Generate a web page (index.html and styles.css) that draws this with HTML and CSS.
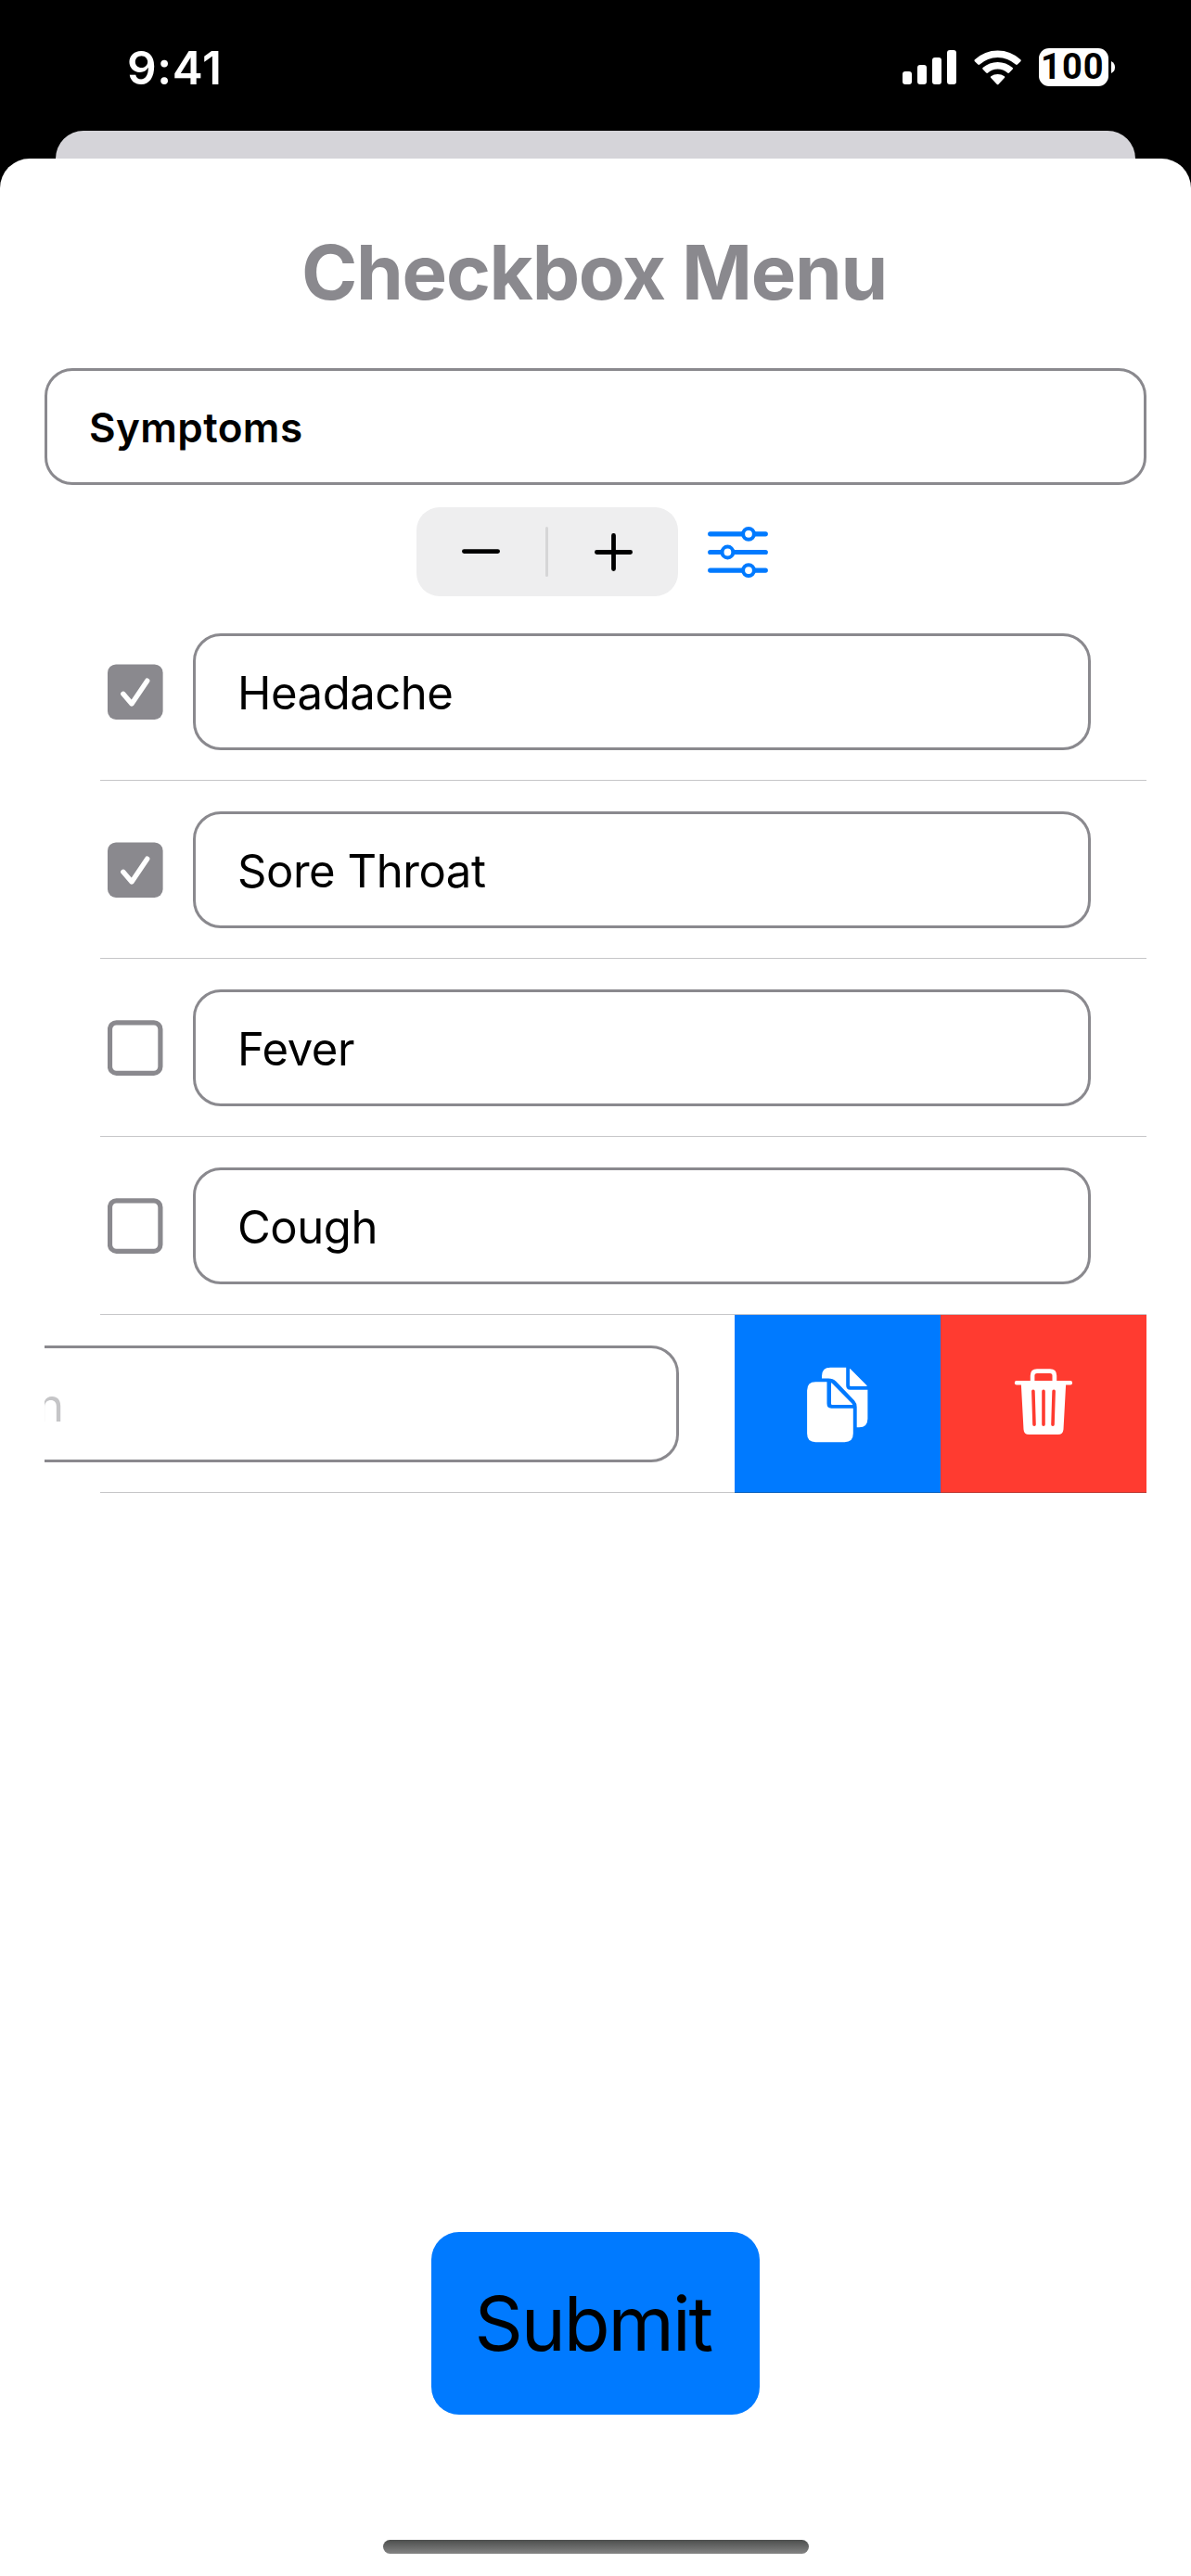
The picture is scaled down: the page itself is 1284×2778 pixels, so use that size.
FILE: index.html
```html
<!DOCTYPE html>
<html lang="en">
<head>
<meta charset="utf-8">
<title>Checkbox Menu</title>
<link rel="stylesheet" href="styles.css">
</head>
<body>
<div class="screen">
  <header class="status">
    <span class="time">9:41</span>
    <div class="indicators">
      <svg class="signal" viewBox="0 0 58 37"><rect y="23" width="10" height="14" rx="3"/><rect x="16" y="16" width="10" height="21" rx="3"/><rect x="32" y="8" width="10" height="29" rx="3"/><rect x="48" width="10" height="37" rx="3"/></svg>
      <svg class="wifi" viewBox="1050 53.5 51 38"><path d="M1050.9 63.8Q1050 64.8 1050.9 65.7L1054.3 69.1Q1055.2 70 1056.2 69.1Q1064.5 61.4 1075.6 61.4T1095 69.1Q1096 70 1096.9 69.1L1100.3 65.7Q1101.2 64.8 1100.3 63.8Q1089.6 54 1075.6 54T1050.9 63.8Z"/><path d="M1059.5 72.5Q1058.7 73.4 1059.6 74.3L1063.2 77.9Q1064.1 78.8 1065.1 78Q1069.6 74.1 1075.6 74.1T1086.1 78Q1087.1 78.8 1088 77.9L1091.6 74.3Q1092.5 73.4 1091.7 72.5Q1084.7 66.5 1075.6 66.5T1059.5 72.5Z"/><path d="M1068.3 81.8Q1067.4 82.7 1068.3 83.6L1074.6 90.2Q1075.6 91.2 1076.6 90.2L1082.9 83.6Q1083.8 82.7 1082.9 81.8Q1079.6 79.4 1075.6 79.4T1068.3 81.8Z"/></svg>
      <div class="battery">
        <span class="level">100</span>
        <svg class="cap" viewBox="0 0 4 13"><path d="M0 0Q4 2 4 6.5T0 13Z"/></svg>
      </div>
    </div>
  </header>
  <div class="backdrop"></div>
  <main class="sheet">
    <h1 class="title">Checkbox Menu</h1>
    <div class="field heading">Symptoms</div>
    <div class="controls">
      <div class="stepper">
        <svg class="sign" viewBox="0 0 41 41"><path d="M2.4 19.6H38.6"/></svg>
        <span class="divider"></span>
        <svg class="sign" viewBox="0 0 41 41"><path d="M2.4 20.5H38.6M20.5 2.4V38.6"/></svg>
      </div>
      <svg class="sliders" viewBox="0 0 65 56"><path d="M2.7 8.8H62.3M2.7 28.5H62.3M2.7 48.1H62.3"/><circle cx="44" cy="8.8" r="5.9"/><circle cx="21.4" cy="28.5" r="5.9"/><circle cx="44" cy="48.1" r="5.9"/></svg>
    </div>
    <ul class="list">
      <li class="row">
        <svg class="check" viewBox="0 0 60 60"><rect class="fill" y="0.4" width="59.6" height="59.6" rx="9"/><path d="M16.8 32.3L26 43L42.7 18.2"/></svg>
        <div class="field item">Headache</div>
      </li>
      <li class="row">
        <svg class="check" viewBox="0 0 60 60"><rect class="fill" y="0.4" width="59.6" height="59.6" rx="9"/><path d="M16.8 32.3L26 43L42.7 18.2"/></svg>
        <div class="field item">Sore Throat</div>
      </li>
      <li class="row">
        <svg class="check" viewBox="0 0 60 60"><rect class="box" x="2.5" y="2.9" width="54.4" height="54.4" rx="7"/></svg>
        <div class="field item">Fever</div>
      </li>
      <li class="row">
        <svg class="check" viewBox="0 0 60 60"><rect class="box" x="2.5" y="2.9" width="54.4" height="54.4" rx="7"/></svg>
        <div class="field item">Cough</div>
      </li>
      <li class="row swiped">
        <div class="field item placeholder">n</div>
        <div class="action copy">
          <svg class="glyph" viewBox="792 1418 222 192"><path d="M886 1486.5V1484Q886 1474.7 895.2 1474.7H912.2V1494Q912.2 1498.7 916.5 1498.7H935.4V1530Q935.4 1539.3 926.2 1539.3H923.7V1517.5Q923.7 1513.2 921 1510.2L901.4 1489.8Q898 1486.5 893 1486.5Z"/><path d="M916 1477Q916 1475.5 917 1476.5L934.4 1494Q935.4 1495 934 1495H917.2Q916 1495 916 1493.8Z"/><path d="M870.1 1499.6Q870.1 1490.3 879.3 1490.3H891.5V1513.5Q891.5 1518.7 896.3 1518.7H919.8V1546Q919.8 1555.2 910.6 1555.2H879.3Q870.1 1555.2 870.1 1546Z"/><path d="M896 1492Q896 1490.8 897 1491.7L918.9 1513.9Q919.8 1515 918.5 1515H897.2Q896 1515 896 1513.8Z"/></svg>
        </div>
        <div class="action trash">
          <svg class="glyph" viewBox="1014 1418 222 192"><path fill-rule="evenodd" d="M1110.8 1489V1483.5Q1110.8 1476.3 1118 1476.3H1132Q1139.2 1476.3 1139.2 1483.5V1489H1154Q1156.1 1489 1156.1 1491.2T1154 1493.4H1149.1L1146.5 1541.4Q1146 1547 1140.6 1547H1109.3Q1103.9 1547 1103.5 1541.4L1100.9 1493.4H1096Q1093.8 1493.4 1093.8 1491.2T1096 1489ZM1115.4 1489H1134.5V1483.6Q1134.5 1481 1132 1481H1118Q1115.4 1481 1115.4 1483.6Z"/><path class="slot" d="M1113.9 1500.4L1115 1536.2M1125 1500.4V1536.2M1136.1 1500.4L1135 1536.2"/></svg>
        </div>
      </li>
    </ul>
    <button class="submit">Submit</button>
    <div class="home"></div>
  </main>
</div>
</body>
</html>
```
FILE: styles.css
```css
* { box-sizing: border-box; }
body { margin: 0; background: #000; font-family: Inter, "Liberation Sans", sans-serif; color: #000; }
svg { display: block; flex: none; }
.screen { width: 1284px; height: 2778px; display: flex; flex-direction: column; overflow: hidden; background: #000; }

.status { height: 141px; padding: 0 82px 0 137px; display: flex; justify-content: space-between; color: #fff; }
.time { line-height: 146px; font-size: 49.5px; font-weight: 600; letter-spacing: 0.7px; }
.indicators { height: 145px; display: flex; align-items: center; fill: #fff; }
.signal { width: 58px; height: 37px; margin-right: 19px; }
.wifi { width: 51px; height: 38px; margin-right: 19px; }
.battery { display: flex; align-items: center; gap: 3px; }
.level { width: 75px; height: 41px; padding-left: 2px; border-radius: 11px; background: #fff; color: #000; font: 700 38px/41px Roboto, "Liberation Sans", sans-serif; letter-spacing: 1.1px; }
.cap { width: 4px; height: 13px; }

.backdrop { height: 30px; margin: 0 60px; background: #d5d4d9; border-radius: 30px 30px 0 0; }
.sheet { flex: 1; display: flex; flex-direction: column; align-items: center; padding: 74px 48px 0; background: #fff; border-radius: 32px 32px 0 0; }
.title { margin: 0 3px 54px 0; line-height: 98px; font-size: 81.6px; font-weight: 700; letter-spacing: -1.3px; color: #8a898e; }

.field { height: 126px; padding: 1px 45px 0; border: 3px solid #8a898e; border-radius: 30px; line-height: 120px; white-space: nowrap; background: #fff; }
.heading { width: 100%; font-size: 44px; font-weight: 600; letter-spacing: 0.4px; }

.controls { width: 100%; margin-top: 24px; padding-left: 401px; display: flex; align-items: center; gap: 32px; }
.stepper { width: 282px; height: 96px; padding: 0 49px; display: flex; align-items: center; justify-content: space-between; background: #eeeeef; border-radius: 25px; }
.sign { width: 41px; height: 41px; fill: none; stroke: #000; stroke-width: 4.8; stroke-linecap: round; }
.divider { width: 3px; height: 54px; margin-right: 2px; border-radius: 2px; background: #d6d6d7; }
.sliders { width: 65px; height: 56px; fill: #fff; stroke: #007aff; stroke-width: 5.2; stroke-linecap: round; }
.sliders circle { stroke-width: 4; }

.list { width: 100%; margin: 7px 0 0; padding: 0; list-style: none; }
.row { height: 192px; padding: 0 60px 0 68px; display: flex; align-items: center; gap: 32px; background: linear-gradient(#c6c6c8, #c6c6c8) 60px 191px / 1128px 1px no-repeat; }
.check { width: 60px; height: 60px; }
.fill { fill: #8a898e; }
.check path { fill: none; stroke: #fff; stroke-width: 5.4; stroke-linecap: round; stroke-linejoin: round; }
.box { fill: none; stroke: #8a898e; stroke-width: 5.2; }
.item { flex: 1; padding-top: 2px; font-size: 49px; letter-spacing: -0.45px; }
.swiped { padding: 0; gap: 0; overflow: hidden; }
.placeholder { margin: 0 60px 0 -60px; padding-left: 49px; color: #c5c5c7; }
.action { width: 222px; height: 192px; border-bottom: 1px solid; }
.glyph { width: 222px; height: 192px; fill: #fff; }
.copy { background: #007aff; border-color: #0a60bd; }
.trash { background: #ff3b30; border-color: #bd3832; }
.slot { fill: none; stroke: #ff3b30; stroke-width: 3.6; stroke-linecap: round; }

.submit { width: 354px; height: 197px; margin: 797px 0 0 417px; align-self: flex-start; padding: 0 0 0 46.5px; border: 0; border-radius: 30px; background: #007aff; color: #000; font: 400 81.5px/197px Inter, "Liberation Sans", sans-serif; letter-spacing: -2.1px; text-align: left; }
.home { width: 459px; height: 15px; margin-top: 135px; border-radius: 8px; background: linear-gradient(#4c4e4d, #848484); }
```
